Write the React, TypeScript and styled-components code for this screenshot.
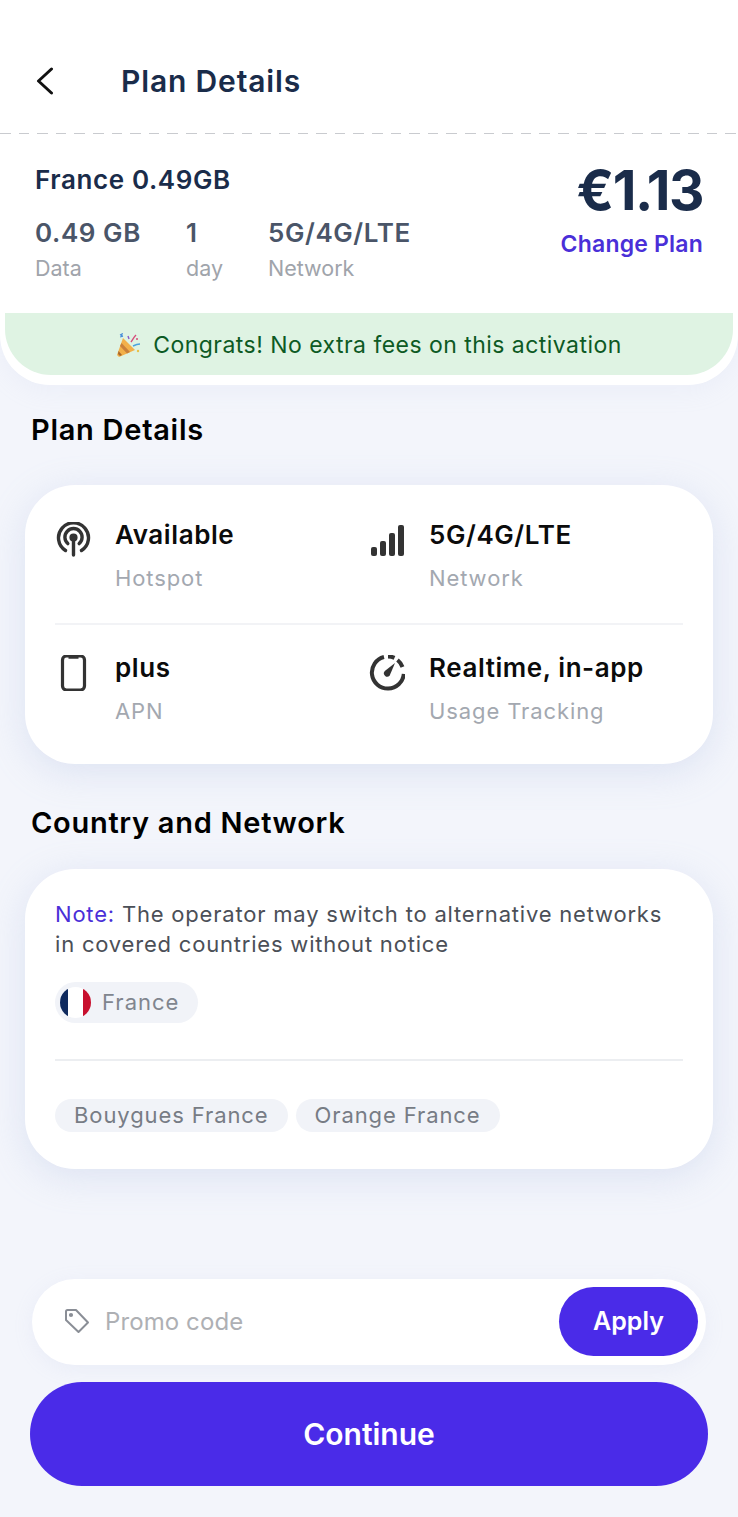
import styled, { createGlobalStyle } from "styled-components";

const EstiloGlobal = createGlobalStyle`
  html, body {
    margin: 0;
    padding: 0;
    background: #f3f5fb;
  }
  * {
    box-sizing: border-box;
  }
`

const Pagina = styled.div`
  width: 738px;
  height: 1517px;
  overflow: hidden;
  display: flex;
  flex-direction: column;
  background: #f3f5fb;
  font-family: Inter, "Liberation Sans", sans-serif;
`

const Topo = styled.div`
  background: #fff;
  padding: 0 0 10px;
  border-radius: 0 0 50px 50px;
  box-shadow: 0 6px 24px rgba(190, 200, 230, 0.12);
`

const Cabecalho = styled.header`
  height: 134px;
  padding: 67px 36px 0;
  display: flex;
  align-items: flex-start;
  gap: 67px;
  background-image: repeating-linear-gradient(to right, #c9cbcf 0 10.5px, transparent 10.5px 18.6px);
  background-size: 100% 1px;
  background-position: 0 133px;
  background-repeat: no-repeat;
`

const TituloCabecalho = styled.h1`
  margin: 0;
  font-size: 30px;
  line-height: 28px;
  font-weight: 600;
  letter-spacing: 0.85px;
  color: #1a2c4a;
`

const Resumo = styled.section`
  height: 179px;
  padding: 31px 35px 0;
  display: flex;
  justify-content: space-between;
`

const NomePlano = styled.div`
  font-size: 26px;
  line-height: 30px;
  font-weight: 600;
  letter-spacing: 0.6px;
  color: #1a2c4a;
`

const Dados = styled.div`
  display: flex;
  margin-top: 22px;
`

const Dado = styled.div<{ $largura: number }>`
  width: ${(p) => p.$largura}px;
`

const ValorDado = styled.div`
  font-size: 26px;
  line-height: 32px;
  font-weight: 600;
  letter-spacing: 0.58px;
  color: #4a5568;
`

const RotuloDado = styled.div`
  margin-top: 6px;
  font-size: 21.5px;
  line-height: 26px;
  color: #a0a4ab;
`

const Preco = styled.div`
  display: flex;
  flex-direction: column;
  align-items: flex-end;
`

const ValorPreco = styled.div`
  margin-top: -3px;
  font-size: 55px;
  line-height: 56px;
  font-weight: 700;
  letter-spacing: -1.5px;
  color: #1a2c4a;
`

const TrocarPlano = styled.div`
  margin-top: 12px;
  font-size: 23px;
  line-height: 28px;
  font-weight: 600;
  letter-spacing: 0.2px;
  color: #4a2fd8;
`

const Faixa = styled.div`
  height: 62px;
  margin: 0 5px;
  padding-top: 2px;
  display: flex;
  align-items: center;
  justify-content: center;
  gap: 12px;
  background: #dff3e3;
  border-radius: 0 0 46px 46px;
  font-size: 23px;
  letter-spacing: 0.46px;
  color: #0d5a24;
`

const TituloSecao = styled.h2<{ $topo: number }>`
  margin: ${(p) => p.$topo}px 0 0 31px;
  font-size: 29px;
  line-height: 34px;
  font-weight: 600;
  letter-spacing: 0.72px;
  color: #000;
`

const Cartao = styled.section<{ $topo: number; $altura: number }>`
  margin: ${(p) => p.$topo}px 25px 0;
  height: ${(p) => p.$altura}px;
  background: #fff;
  border-radius: 50px;
  box-shadow: 0 8px 36px rgba(170, 185, 225, 0.3);
`

const CartaoDetalhes = styled(Cartao)`
  padding: 30px 30px 0;
`

const LinhaDetalhes = styled.div<{ $divisor?: boolean }>`
  display: grid;
  grid-template-columns: 314px 1fr;
  height: ${(p) => (p.$divisor ? 110 : 119)}px;
  padding-top: ${(p) => (p.$divisor ? 0 : 23)}px;
  border-bottom: ${(p) => (p.$divisor ? "2px solid #f2f3f6" : "none")};
`

const ItemDetalhe = styled.div`
  display: flex;
  align-items: flex-start;
  gap: 24px;
`

const CaixaIcone = styled.div`
  width: 36px;
  height: 36px;
  margin-top: 7px;
  flex: none;
  color: #333;
`

const TextoPrincipal = styled.div`
  font-size: 26px;
  line-height: 40px;
  font-weight: 600;
  letter-spacing: 0.58px;
  color: #0b0b0b;
`

const TextoSecundario = styled.div`
  margin-top: 3px;
  font-size: 22px;
  line-height: 40px;
  letter-spacing: 0.9px;
  color: #a3a8b0;
`

const CartaoPais = styled(Cartao)`
  padding: 30px 30px 0;
`

const Nota = styled.p`
  margin: 0;
  font-size: 22px;
  line-height: 30px;
  letter-spacing: 0.8px;
  color: #4b4f57;
`

const NotaDestaque = styled.span`
  color: #4a2fd8;
`

const ChipPais = styled.div`
  margin-top: 23px;
  width: max-content;
  height: 41px;
  padding: 0 19px 0 5px;
  display: flex;
  align-items: center;
  gap: 11px;
  border-radius: 21px;
  background: #f1f3f8;
  font-size: 22px;
  letter-spacing: 1px;
  color: #80858e;
`

const NomePais = styled.span`
  margin-top: -2px;
`

const Divisor = styled.div`
  margin-top: 36px;
  height: 2px;
  background: #eceef1;
`

const ListaOperadoras = styled.div`
  margin-top: 38px;
  display: flex;
  gap: 8px;
`

const ChipOperadora = styled.div`
  height: 33px;
  padding: 0 19px 2px;
  display: flex;
  align-items: center;
  border-radius: 17px;
  background: #f1f3f8;
  font-size: 22px;
  letter-spacing: 0.9px;
  color: #777c85;
`

const Rodape = styled.footer`
  margin-top: auto;
  padding: 0 30px 31px;
  display: flex;
  flex-direction: column;
  gap: 17px;
`

const CampoPromo = styled.div`
  margin: 0 2px;
  height: 86px;
  padding: 0 8px 2px 32px;
  display: flex;
  align-items: center;
  gap: 15px;
  background: #fff;
  border-radius: 43px;
  box-shadow: 0 4px 20px rgba(170, 185, 225, 0.12);
`

const TextoPromo = styled.div`
  flex: 1;
  font-size: 24px;
  letter-spacing: 0.1px;
  color: #aeb0b4;
`

const BotaoAplicar = styled.button`
  width: 139px;
  height: 69px;
  border: none;
  border-radius: 35px;
  background: #4a2be8;
  color: #fff;
  font-family: inherit;
  font-size: 25px;
  font-weight: 600;
`

const BotaoContinuar = styled.button`
  height: 104px;
  border: none;
  border-radius: 52px;
  background: #4a2be8;
  color: #fff;
  font-family: inherit;
  font-size: 30px;
  font-weight: 600;
`

function IconeVoltar() {
  return (
    <svg width="18" height="28" viewBox="0 0 18 28" fill="none" stroke="#111" strokeWidth="3" strokeLinecap="round" strokeLinejoin="round">
      <path d="M15.5 2 2.5 14l13 12" />
    </svg>
  )
}

function IconeFesta() {
  return (
    <svg width="25" height="25" viewBox="0 0 25 25" fill="none">
      <path d="M7 5 19 17 3 24 1 22Z" fill="#f2b04a" />
      <path d="M5.5 10 14 19l-3 1.6L4 13Z" fill="#c9803a" />
      <path d="M2.5 18 6 22l-2 1-2-2Z" fill="#a8672c" />
      <path d="M4 2 6 1 5 3.5 7 3" stroke="#4a90d9" strokeWidth="1.3" />
      <path d="M15 9c2-3 3-5 5-7" stroke="#d64b7a" strokeWidth="1.4" />
      <path d="M12 3l1 3" stroke="#8a5ac8" strokeWidth="1.4" />
      <path d="M17 13c2-1 4-2 7-2" stroke="#4aa3df" strokeWidth="1.4" />
      <circle cx="22" cy="18" r="1.2" fill="#e8c24a" />
      <circle cx="21" cy="6" r="1" fill="#d64b7a" />
    </svg>
  )
}

function IconeHotspot() {
  return (
    <svg width="36" height="36" viewBox="0 0 36 36" fill="none" stroke="currentColor" strokeWidth="3.4" strokeLinecap="round">
      <path d="M10.5 28.5A15 15 0 1 1 26.5 28.5" />
      <path d="M12.8 21.6A8.6 8.6 0 1 1 24.2 21.6" />
      <circle cx="18.5" cy="15.5" r="2.4" fill="currentColor" />
      <path d="M18.5 16v17" />
    </svg>
  )
}

function IconeSinal() {
  return (
    <svg width="36" height="36" viewBox="0 0 36 36" fill="currentColor">
      <rect x="2" y="25" width="6" height="9" rx="2" />
      <rect x="11" y="19" width="6" height="15" rx="2" />
      <rect x="20" y="11" width="6" height="23" rx="2" />
      <rect x="29" y="3" width="6" height="31" rx="2" />
    </svg>
  )
}

function IconeCelular() {
  return (
    <svg width="36" height="36" viewBox="0 0 36 36" fill="none" stroke="currentColor" strokeWidth="3.2">
      <rect x="7.5" y="1" width="22" height="34" rx="4" />
      <path d="M13.5 2h10" strokeWidth="3.5" />
    </svg>
  )
}

function IconeVelocidade() {
  return (
    <svg width="36" height="36" viewBox="0 0 36 36" fill="none" stroke="currentColor" strokeWidth="4">
      <g transform="translate(1 -1)">
        <path d="M33.8 20A16 16 0 1 1 14 3" />
        <path d="M18 2.4a16 16 0 0 1 6.5 1.4" />
        <path d="M27.5 6a16 16 0 0 1 5 7" />
        <path d="M25 9 14.8 17a3.4 3.4 0 0 0 4.8 4.8Z" fill="currentColor" stroke="none" />
      </g>
    </svg>
  )
}

function IconeEtiqueta() {
  return (
    <svg width="26" height="26" viewBox="0 0 26 26" fill="none" stroke="#8a8e96" strokeWidth="2" strokeLinejoin="round">
      <path d="M2 3.5A1.5 1.5 0 0 1 3.5 2H12l12 12.5L14.5 24 2 12Z" />
      <circle cx="7" cy="7" r="1.1" fill="#8a8e96" />
    </svg>
  )
}

function Bandeira() {
  return (
    <svg width="31" height="31" viewBox="0 0 31 31">
      <defs>
        <clipPath id="circulo">
          <circle cx="15.5" cy="15.5" r="15.5" />
        </clipPath>
      </defs>
      <g clipPath="url(#circulo)">
        <rect width="8" height="31" fill="#0f2a5e" />
        <rect x="8" width="15" height="31" fill="#fff" />
        <rect x="23" width="8" height="31" fill="#c8102e" />
      </g>
    </svg>
  )
}

export default function App() {
  return (
    <Pagina>
      <EstiloGlobal />
      <Topo>
        <Cabecalho>
          <IconeVoltar />
          <TituloCabecalho>Plan Details</TituloCabecalho>
        </Cabecalho>
        <Resumo>
          <div>
            <NomePlano>France 0.49GB</NomePlano>
            <Dados>
              <Dado $largura={151}>
                <ValorDado>0.49 GB</ValorDado>
                <RotuloDado>Data</RotuloDado>
              </Dado>
              <Dado $largura={82}>
                <ValorDado>1</ValorDado>
                <RotuloDado>day</RotuloDado>
              </Dado>
              <Dado $largura={160}>
                <ValorDado>5G/4G/LTE</ValorDado>
                <RotuloDado>Network</RotuloDado>
              </Dado>
            </Dados>
          </div>
          <Preco>
            <ValorPreco>€1.13</ValorPreco>
            <TrocarPlano>Change Plan</TrocarPlano>
          </Preco>
        </Resumo>
        <Faixa>
          <IconeFesta />
          <span>Congrats! No extra fees on this activation</span>
        </Faixa>
      </Topo>

      <TituloSecao $topo={28}>Plan Details</TituloSecao>
      <CartaoDetalhes $topo={38} $altura={279}>
        <LinhaDetalhes $divisor>
          <ItemDetalhe>
            <CaixaIcone><IconeHotspot /></CaixaIcone>
            <div>
              <TextoPrincipal>Available</TextoPrincipal>
              <TextoSecundario>Hotspot</TextoSecundario>
            </div>
          </ItemDetalhe>
          <ItemDetalhe>
            <CaixaIcone><IconeSinal /></CaixaIcone>
            <div>
              <TextoPrincipal>5G/4G/LTE</TextoPrincipal>
              <TextoSecundario>Network</TextoSecundario>
            </div>
          </ItemDetalhe>
        </LinhaDetalhes>
        <LinhaDetalhes>
          <ItemDetalhe>
            <CaixaIcone><IconeCelular /></CaixaIcone>
            <div>
              <TextoPrincipal>plus</TextoPrincipal>
              <TextoSecundario>APN</TextoSecundario>
            </div>
          </ItemDetalhe>
          <ItemDetalhe>
            <CaixaIcone><IconeVelocidade /></CaixaIcone>
            <div>
              <TextoPrincipal>Realtime, in-app</TextoPrincipal>
              <TextoSecundario>Usage Tracking</TextoSecundario>
            </div>
          </ItemDetalhe>
        </LinhaDetalhes>
      </CartaoDetalhes>

      <TituloSecao $topo={42}>Country and Network</TituloSecao>
      <CartaoPais $topo={29} $altura={300}>
        <Nota>
          <NotaDestaque>Note:</NotaDestaque> The operator may switch to alternative networks in covered countries without notice
        </Nota>
        <ChipPais>
          <Bandeira />
          <NomePais>France</NomePais>
        </ChipPais>
        <Divisor />
        <ListaOperadoras>
          <ChipOperadora>Bouygues France</ChipOperadora>
          <ChipOperadora>Orange France</ChipOperadora>
        </ListaOperadoras>
      </CartaoPais>

      <Rodape>
        <CampoPromo>
          <IconeEtiqueta />
          <TextoPromo>Promo code</TextoPromo>
          <BotaoAplicar>Apply</BotaoAplicar>
        </CampoPromo>
        <BotaoContinuar>Continue</BotaoContinuar>
      </Rodape>
    </Pagina>
  )
}
